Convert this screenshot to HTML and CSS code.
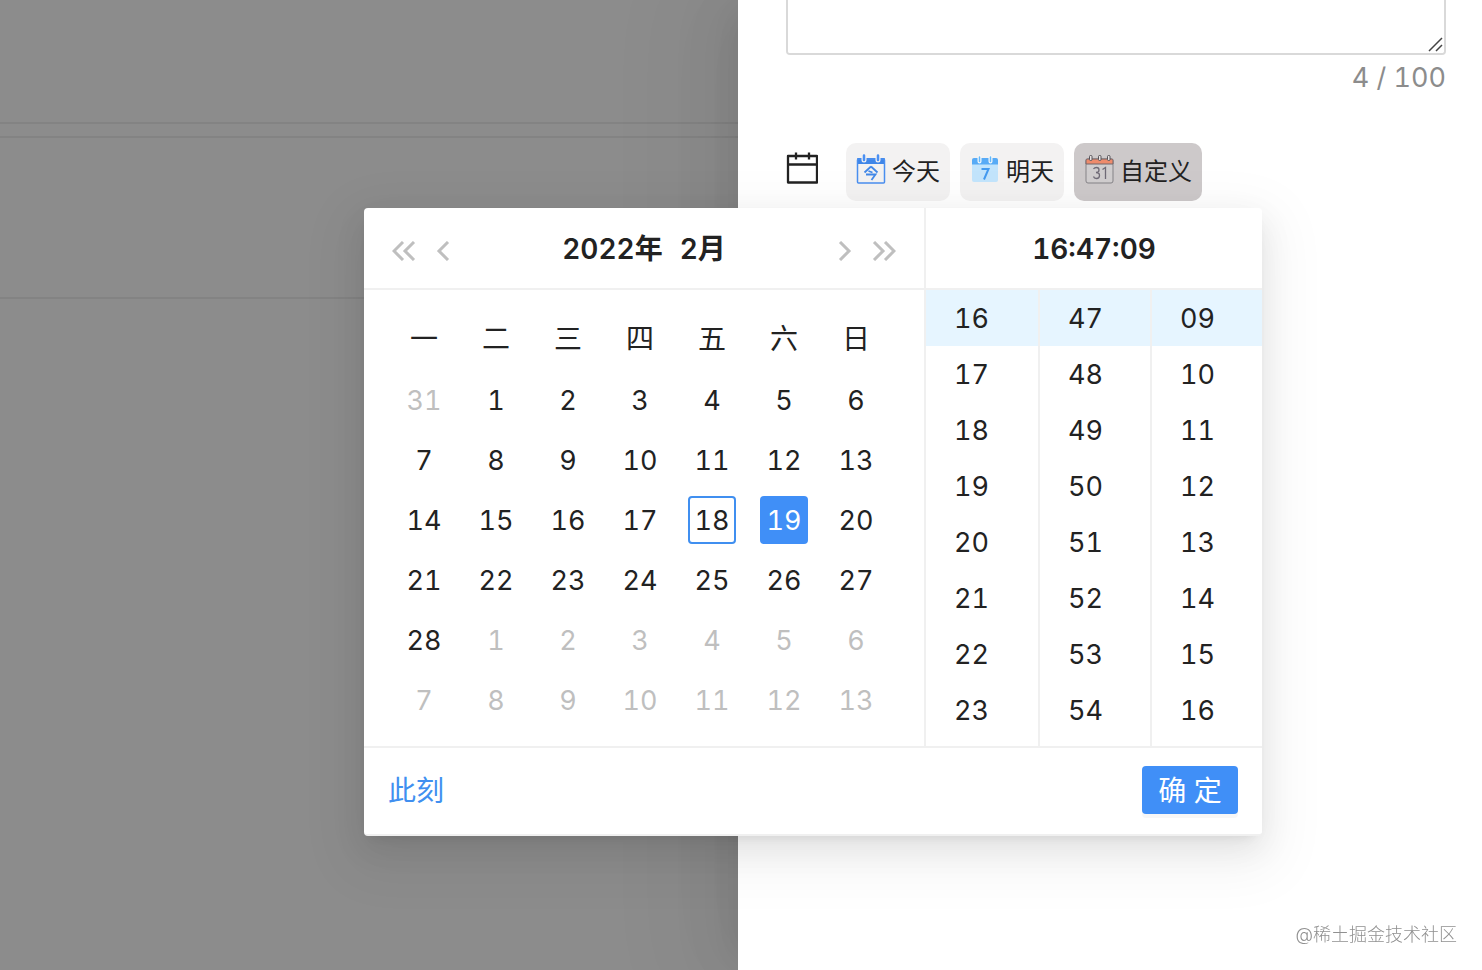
FILE: index.html
```html
<!DOCTYPE html>
<html lang="zh-CN">
<head>
<meta charset="utf-8">
<title>待办日期选择</title>
<link rel="stylesheet" href="styles.css">
</head>
<body>
<div class="layout">
  <div class="backdrop">
    <div class="strip strip-top"></div>
    <div class="strip strip-gap"></div>
    <div class="strip strip-main"></div>
  </div>
  <main class="drawer">
    <div class="note">
      <textarea class="note-input" aria-label="备注"></textarea>
      <svg class="grip" viewBox="0 0 16 16" aria-hidden="true"><path d="M2 14L15 1M9 14L15 8" fill="none" stroke="#444" stroke-width="1.5"/></svg>
    </div>
    <div class="count">4 / 100</div>
    <div class="date-row">
      <svg class="calendar-icon" viewBox="0 0 32 32" aria-hidden="true"><g fill="none" stroke="#222" stroke-width="2.300"><path d="M2 4H31V30.500H2ZM2 12.500H31" stroke-linejoin="round"/><path d="M10 0.500V7.500M23 0.500V7.500"/></g></svg>
      <button class="chip" type="button">
        <svg class="chip-icon" viewBox="0 0 30 30" aria-hidden="true"><path d="M2 4H28Q29 4 29 5V10H1V5Q1 4 2 4Z" fill="#3f86e8"/><rect x="1.500" y="5" width="27" height="24" rx="1" fill="none" stroke="#4a8ff0" stroke-width="1.500"/><g stroke-linecap="round"><path d="M8 2.500V6M22 2.500V6" stroke="#f2f1f2" stroke-width="5"/><path d="M8 1.500V6M22 1.500V6" stroke="#4a90f3" stroke-width="2.500"/></g><path d="M15 12.500L8.500 18.500M15 12.500L21.500 18.500M12.500 17L16.500 18.500M10 20.500H19.500L15.500 26" fill="none" stroke="#4288e8" stroke-width="1.800"/></svg>
        <span>今天</span>
      </button>
      <button class="chip" type="button">
        <svg class="chip-icon" viewBox="0 0 30 30" aria-hidden="true"><path d="M2 10H28V26Q28 28 26 28H4Q2 28 2 26Z" fill="#c2e4fc"/><path d="M4 4H26Q28 4 28 6V10.500H2V6Q2 4 4 4Z" fill="#58abf6"/><g stroke-linecap="round"><path d="M9.500 3V7.500M20.500 3V7.500" stroke="#f4f8fa" stroke-width="4"/><path d="M9.500 3V7.500M20.500 3V7.500" stroke="#65b8fa" stroke-width="1.500"/></g><path d="M11.500 15H18.500L14 25.500" fill="none" stroke="#439af0" stroke-width="2"/></svg>
        <span>明天</span>
      </button>
      <button class="chip chip-active" type="button" aria-expanded="true">
        <svg class="chip-icon" viewBox="0 0 30 30" aria-hidden="true"><rect x="2" y="5" width="27" height="24" rx="2" fill="#d0cdce" stroke="#858387"/><path d="M2 10V6Q2 5 3 5H28Q29 5 29 6V10Z" fill="#ee8b6c" stroke="#73666a"/><g fill="#e8e2e1" stroke="#56545b"><rect x="5.500" y="1.500" width="2.500" height="5" rx="1"/><rect x="14.500" y="1.500" width="2.500" height="5" rx="1"/><rect x="23.500" y="1.500" width="2.500" height="5" rx="1"/></g><path d="M9.500 15Q10.500 13.500 12.500 13.500Q15 13.500 15 16T12 18.500Q15.500 18.500 15.500 21.500T12.500 24.500Q10 24.500 9.500 22.500M18.500 15.500L21.500 13.500V25" fill="none" stroke="#6f6a76" stroke-width="1.300"/></svg>
        <span>自定义</span>
      </button>

      <section class="picker" aria-label="选择日期时间">
        <div class="panels">
          <div class="date-panel">
            <header class="panel-head">
              <button class="nav" type="button" aria-label="上一年"><svg viewBox="0 0 24 20"><path d="M11 1L2 10L11 19M22 1L13 10L22 19"/></svg></button>
              <button class="nav" type="button" aria-label="上个月"><svg viewBox="0 0 24 20"><path d="M16 1L7 10L16 19"/></svg></button>
              <div class="month-title"><button type="button">2022年</button><button type="button">2月</button></div>
              <button class="nav" type="button" aria-label="下个月"><svg viewBox="0 0 24 20"><path d="M8 1L17 10L8 19"/></svg></button>
              <button class="nav" type="button" aria-label="下一年"><svg viewBox="0 0 24 20"><path d="M2 1L11 10L2 19M13 1L22 10L13 19"/></svg></button>
            </header>
            <div class="date-body">
              <table class="days">
                <thead><tr><th>一</th><th>二</th><th>三</th><th>四</th><th>五</th><th>六</th><th>日</th></tr></thead>
                <tbody>
                  <tr><td class="out"><button>31</button></td><td><button>1</button></td><td><button>2</button></td><td><button>3</button></td><td><button>4</button></td><td><button>5</button></td><td><button>6</button></td></tr>
                  <tr><td><button>7</button></td><td><button>8</button></td><td><button>9</button></td><td><button>10</button></td><td><button>11</button></td><td><button>12</button></td><td><button>13</button></td></tr>
                  <tr><td><button>14</button></td><td><button>15</button></td><td><button>16</button></td><td><button>17</button></td><td class="today"><button>18</button></td><td class="selected"><button>19</button></td><td><button>20</button></td></tr>
                  <tr><td><button>21</button></td><td><button>22</button></td><td><button>23</button></td><td><button>24</button></td><td><button>25</button></td><td><button>26</button></td><td><button>27</button></td></tr>
                  <tr><td><button>28</button></td><td class="out"><button>1</button></td><td class="out"><button>2</button></td><td class="out"><button>3</button></td><td class="out"><button>4</button></td><td class="out"><button>5</button></td><td class="out"><button>6</button></td></tr>
                  <tr class="out"><td><button>7</button></td><td><button>8</button></td><td><button>9</button></td><td><button>10</button></td><td><button>11</button></td><td><button>12</button></td><td><button>13</button></td></tr>
                </tbody>
              </table>
            </div>
          </div>
          <div class="time-panel">
            <header class="panel-head time-title">16:47:09</header>
            <div class="time-columns">
              <ul><li><button class="on">16</button></li><li><button>17</button></li><li><button>18</button></li><li><button>19</button></li><li><button>20</button></li><li><button>21</button></li><li><button>22</button></li><li><button>23</button></li></ul>
              <ul><li><button class="on">47</button></li><li><button>48</button></li><li><button>49</button></li><li><button>50</button></li><li><button>51</button></li><li><button>52</button></li><li><button>53</button></li><li><button>54</button></li></ul>
              <ul><li><button class="on">09</button></li><li><button>10</button></li><li><button>11</button></li><li><button>12</button></li><li><button>13</button></li><li><button>14</button></li><li><button>15</button></li><li><button>16</button></li></ul>
            </div>
          </div>
        </div>
        <footer class="picker-foot">
          <a class="now" href="#">此刻</a>
          <button class="ok" type="button">确 定</button>
        </footer>
      </section>
    </div>
  </main>
</div>
<div class="watermark">@稀土掘金技术社区</div>
</body>
</html>
```

FILE: styles.css
```css
* { box-sizing: border-box; }
body {
  margin: 0;
  background: #fff;
  color: #222;
  font-family: Inter, "Noto Sans CJK SC", sans-serif;
  font-size: 28px;
  line-height: 44px;
  font-variant-numeric: tabular-nums;
}
button {
  margin: 0;
  padding: 0;
  border: 0;
  background: none;
  color: inherit;
  font: inherit;
  font-variant-numeric: inherit;
  cursor: pointer;
}
svg { display: block; flex: none; }

.layout { display: flex; min-height: 100vh; overflow: hidden; }
.backdrop { flex: 1; background: #8c8c8c; }
.strip { border-bottom: 2px solid #838383; }
.strip-top { height: 124px; }
.strip-gap { height: 14px; }
.strip-main { height: 161px; }

.drawer {
  width: 744px;
  padding: 0 36px 0 48px;
  background: #fff;
  box-shadow: -12px 0 32px -16px rgba(0,0,0,.08), -18px 0 56px rgba(0,0,0,.05), -24px 0 96px 32px rgba(0,0,0,.03);
}
.note { position: relative; }
.note-input {
  display: block;
  width: 100%;
  height: 55px;
  padding: 8px 22px;
  border: 2px solid #d9d9d9;
  border-top: 0;
  border-radius: 0 0 4px 4px;
  font: inherit;
  resize: none;
  outline: none;
}
.grip { position: absolute; right: 3px; bottom: 2px; width: 16px; height: 16px; }
.count { padding-top: 1px; color: #8c8c8c; font-size: 27px; text-align: right; }

.date-row { position: relative; display: flex; align-items: center; gap: 10px; margin-top: 43px; }
.calendar-icon { width: 32px; height: 32px; margin: 0 18px 8px 0; }
.chip {
  display: flex;
  align-items: center;
  gap: 6px;
  height: 58px;
  padding: 0 10px;
  border-radius: 10px;
  background: #f3f2f2;
  font-size: 24px;
}
.chip-active { background: #cdc9ca; }
.chip-icon { width: 30px; height: 30px; margin-bottom: 6px; }

.picker {
  position: absolute;
  top: calc(100% + 7px);
  right: 184px;
  width: 898px;
  border-radius: 4px;
  border-bottom: 2px solid #f0f0f0;
  background: #fff;
  box-shadow: 0 6px 12px -8px rgba(0,0,0,.12), 0 12px 32px rgba(0,0,0,.08), 0 18px 56px 16px rgba(0,0,0,.05);
}
.panels { display: flex; border-bottom: 2px solid #f0f0f0; }
.date-panel { flex: 1; border-right: 2px solid #f0f0f0; }
.panel-head {
  display: flex;
  align-items: center;
  height: 82px;
  padding: 2px 20px 0;
  border-bottom: 2px solid #f0f0f0;
  font-weight: 600;
}
.nav { display: grid; place-items: center; width: 40px; height: 44px; padding-top: 4px; }
.nav svg { width: 24px; height: 20px; fill: none; stroke: #bfbfbf; stroke-width: 3px; }
.month-title { display: flex; flex: 1; justify-content: center; gap: 17px; }
.date-body { padding: 16px 32px 16px 24px; }
.days { width: 100%; border-collapse: collapse; table-layout: fixed; }
.days th { height: 64px; padding: 2px 0 0; font-weight: 400; }
.days td { height: 60px; padding: 0; text-align: center; }
.days button { display: block; width: 48px; height: 48px; margin: 0 auto; border-radius: 4px; font-size: 27px; line-height: 50px; }
.out { color: #bfbfbf; }
.days .today button { border: 2px solid #408ff0; line-height: 46px; }
.days .selected button { background: #408ff7; color: #fff; }

.time-panel { width: 336px; }
.time-title { justify-content: center; }
.time-columns { display: grid; grid-template-columns: repeat(3, 1fr); height: 456px; }
.time-columns ul { margin: 0; padding: 0; list-style: none; }
.time-columns ul + ul { border-left: 2px solid #f0f0f0; }
.time-columns button { display: block; width: 100%; height: 56px; padding: 2px 0 0 28px; font-size: 27px; text-align: left; }
.time-columns .on { background: #e6f5ff; }

.picker-foot { display: flex; align-items: center; justify-content: space-between; height: 86px; padding: 0 24px 2px; }
.now { padding-top: 2px; color: #408ff0; text-decoration: none; }
.ok { width: 96px; height: 48px; padding-top: 2px; border-radius: 4px; background: #408ff7; color: #fff; box-shadow: 0 4px 0 rgba(0,0,0,.03); }

.watermark {
  position: fixed;
  right: 25px;
  bottom: 21px;
  color: #909090;
  font-size: 18px;
  font-weight: 300;
  line-height: 28px;
}
```
